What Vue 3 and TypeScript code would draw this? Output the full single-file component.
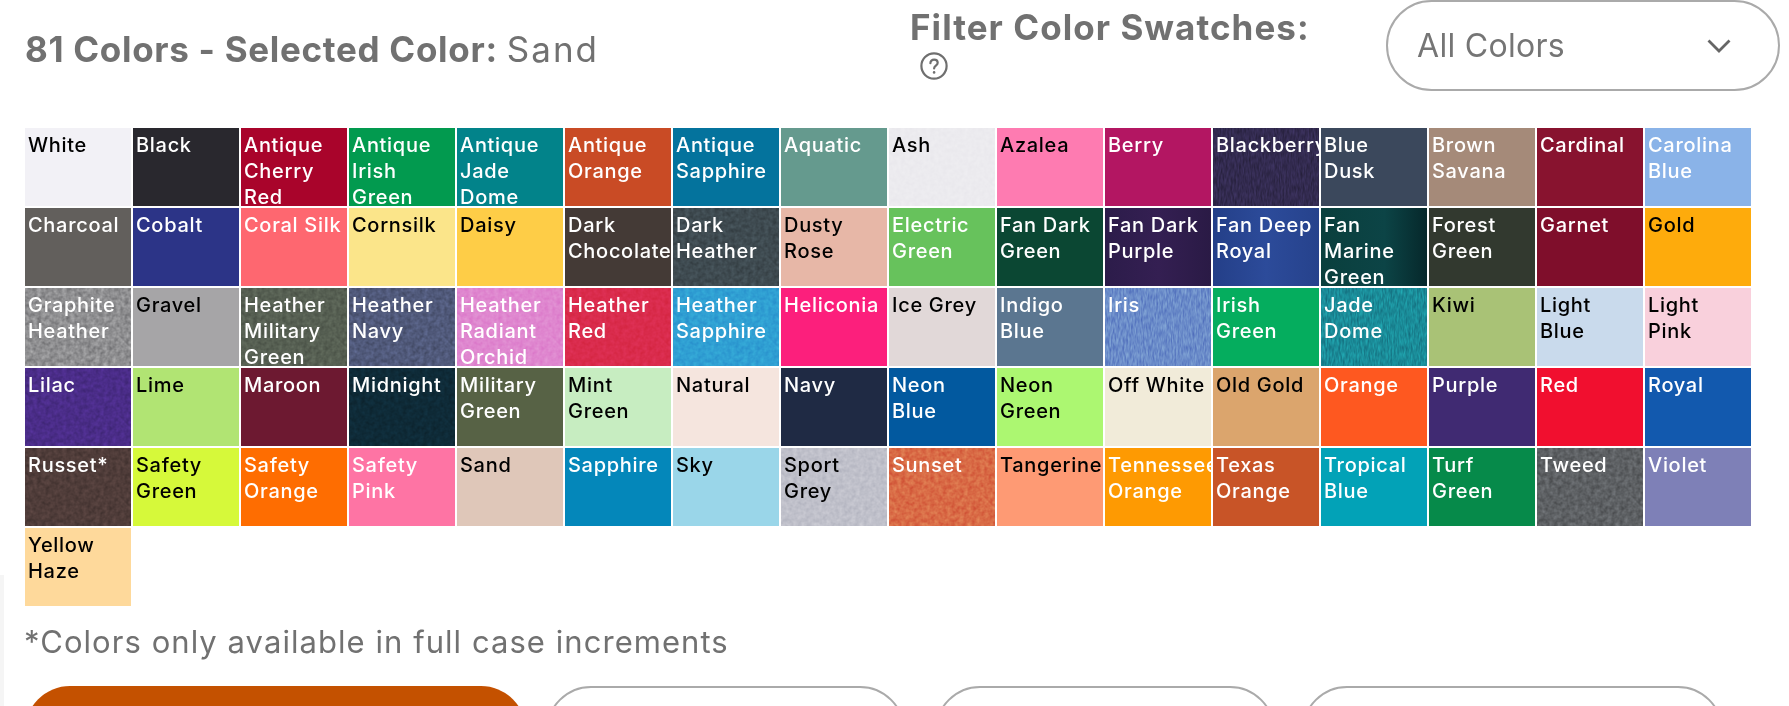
<script setup lang="ts">
interface Swatch {
  name: string
  bg: string
  light?: boolean
  // overlay strength of the fabric texture, 0 to 1
  noise?: number
  rib?: boolean
}

const swatches: Swatch[] = [
  { name: 'White', bg: '#f2f1f6', light: true },
  { name: 'Black', bg: '#29282e' },
  { name: 'Antique Cherry Red', bg: '#a9042b' },
  { name: 'Antique Irish Green', bg: '#029a4f' },
  { name: 'Antique Jade Dome', bg: '#02838a' },
  { name: 'Antique Orange', bg: '#c94b25' },
  { name: 'Antique Sapphire', bg: '#04739d' },
  { name: 'Aquatic', bg: '#659a8e' },
  { name: 'Ash', bg: '#ecebef', light: true, noise: 0.25 },
  { name: 'Azalea', bg: '#fe7bb1', light: true },
  { name: 'Berry', bg: '#b31662' },
  { name: 'Blackberry', bg: '#322a4f', noise: 0.4, rib: true },
  { name: 'Blue Dusk', bg: '#3b485c' },
  { name: 'Brown Savana', bg: '#a58a79' },
  { name: 'Cardinal', bg: '#88132f' },
  { name: 'Carolina Blue', bg: '#8ab3e8' },
  { name: 'Charcoal', bg: '#625f5c' },
  { name: 'Cobalt', bg: '#2c3487' },
  { name: 'Coral Silk', bg: '#fe6770' },
  { name: 'Cornsilk', bg: '#fbe58a', light: true },
  { name: 'Daisy', bg: '#fecd47', light: true },
  { name: 'Dark Chocolate', bg: '#443a36' },
  { name: 'Dark Heather', bg: '#3e4a50', noise: 0.3 },
  { name: 'Dusty Rose', bg: '#e7b7a7', light: true },
  { name: 'Electric Green', bg: '#67c25c' },
  { name: 'Fan Dark Green', bg: '#0b4733' },
  { name: 'Fan Dark Purple', bg: 'linear-gradient(90deg, #2c1c4a, #341f52 50%, #2a1a45)' },
  { name: 'Fan Deep Royal', bg: 'linear-gradient(90deg, #243f88, #2c4b9a 50%, #26428c)' },
  { name: 'Fan Marine Green', bg: 'linear-gradient(90deg, #0a3f3d, #0c4446 60%, #06282b)' },
  { name: 'Forest Green', bg: '#32392f' },
  { name: 'Garnet', bg: '#7f0e2b' },
  { name: 'Gold', bg: '#feab0c', light: true },
  { name: 'Graphite Heather', bg: '#8e8e90', noise: 0.4 },
  { name: 'Gravel', bg: '#a6a5a7', light: true },
  { name: 'Heather Military Green', bg: '#565f52', noise: 0.25 },
  { name: 'Heather Navy', bg: '#50597a', noise: 0.3 },
  { name: 'Heather Radiant Orchid', bg: '#df86cf', noise: 0.2 },
  { name: 'Heather Red', bg: '#da2b4c', noise: 0.25 },
  { name: 'Heather Sapphire', bg: '#2f9fd3', noise: 0.25 },
  { name: 'Heliconia', bg: '#fc1f7c' },
  { name: 'Ice Grey', bg: '#e1d8d8', light: true },
  { name: 'Indigo Blue', bg: '#5b7690' },
  { name: 'Iris', bg: '#6a8bc9', noise: 0.4, rib: true },
  { name: 'Irish Green', bg: '#05ad5e' },
  { name: 'Jade Dome', bg: '#1a8b98', noise: 0.4, rib: true },
  { name: 'Kiwi', bg: '#a9c276', light: true },
  { name: 'Light Blue', bg: '#c9daec', light: true },
  { name: 'Light Pink', bg: '#f9d0dc', light: true },
  { name: 'Lilac', bg: '#4a2c88', noise: 0.25 },
  { name: 'Lime', bg: '#b1e473', light: true },
  { name: 'Maroon', bg: '#6d1931' },
  { name: 'Midnight', bg: '#0e2a37', noise: 0.3 },
  { name: 'Military Green', bg: '#576245' },
  { name: 'Mint Green', bg: '#c7edc1', light: true },
  { name: 'Natural', bg: '#f5e5de', light: true },
  { name: 'Navy', bg: '#1f2a44' },
  { name: 'Neon Blue', bg: '#02599f' },
  { name: 'Neon Green', bg: '#acf771', light: true },
  { name: 'Off White', bg: '#f1ebd9', light: true },
  { name: 'Old Gold', bg: '#dba56d', light: true },
  { name: 'Orange', bg: '#fe5820' },
  { name: 'Purple', bg: '#402a72' },
  { name: 'Red', bg: '#f10f2f' },
  { name: 'Royal', bg: '#1259ae' },
  { name: 'Russet*', bg: '#4f3c39', noise: 0.3 },
  { name: 'Safety Green', bg: '#d6f93a', light: true },
  { name: 'Safety Orange', bg: '#fe6d01' },
  { name: 'Safety Pink', bg: '#fe74a4' },
  { name: 'Sand', bg: '#dfc7b9', light: true },
  { name: 'Sapphire', bg: '#0487ba' },
  { name: 'Sky', bg: '#9ad6e9', light: true },
  { name: 'Sport Grey', bg: '#bfc0ca', light: true, noise: 0.3 },
  { name: 'Sunset', bg: '#d96a45', noise: 0.4 },
  { name: 'Tangerine', bg: '#fe9a74', light: true },
  { name: 'Tennessee Orange', bg: '#fe9a02' },
  { name: 'Texas Orange', bg: '#c85427' },
  { name: 'Tropical Blue', bg: '#02a2b7' },
  { name: 'Turf Green', bg: '#068a4a' },
  { name: 'Tweed', bg: '#5d6063', noise: 0.35 },
  { name: 'Violet', bg: '#7e80b7' },
  { name: 'Yellow Haze', bg: '#fed99b', light: true },
]
</script>

<template>
  <div class="page">
    <div class="rail" />
    <svg class="defs" width="0" height="0" aria-hidden="true">
      <filter id="heather" x="0" y="0" width="100%" height="100%" color-interpolation-filters="sRGB">
        <feTurbulence type="fractalNoise" baseFrequency="0.24" numOctaves="2" seed="4" />
        <feColorMatrix values="0.9 0 0 0 0.05  0.9 0 0 0 0.05  0.9 0 0 0 0.05  0 0 0 0 1" />
      </filter>
      <filter id="ribbed" x="0" y="0" width="100%" height="100%" color-interpolation-filters="sRGB">
        <feTurbulence type="fractalNoise" baseFrequency="0.6 0.14" numOctaves="2" seed="9" />
        <feColorMatrix values="0.9 0 0 0 0.05  0.9 0 0 0 0.05  0.9 0 0 0 0.05  0 0 0 0 1" />
      </filter>
    </svg>

    <header class="top">
      <h2 class="count">81 Colors - Selected Color: <span>Sand</span></h2>
      <div class="filter">
        <div class="filter__label">
          <div>Filter Color Swatches:</div>
          <svg class="filter__help" viewBox="0 0 28 28" fill="none" stroke="#6f6f6f" stroke-width="2.2">
            <circle cx="14" cy="14" r="12.6" />
            <path d="M10.4 11.2c0-2.200 1.600-3.600 3.700-3.600s3.600 1.300 3.600 3.200c0 2.900-3.600 2.900-3.600 5.600" stroke-linecap="round" />
            <circle cx="14.100" cy="20.400" r="1.300" fill="#6f6f6f" stroke="none" />
          </svg>
        </div>
        <div class="select">
          <span>All Colors</span>
          <svg class="select__chevron" viewBox="0 0 24 14" fill="none" stroke="#666" stroke-width="2.800">
            <path d="M1.500 1.500 12 12 22.500 1.500" />
          </svg>
        </div>
      </div>
    </header>

    <div class="grid">
      <div
        v-for="s in swatches"
        :key="s.name"
        class="swatch"
        :class="{ 'swatch--light': s.light }"
        :style="{ background: s.bg }"
      >
        <svg v-if="s.noise" class="swatch__noise" width="106" height="78" :style="{ opacity: s.noise }">
          <rect width="106" height="78" :filter="s.rib ? 'url(#ribbed)' : 'url(#heather)'" />
        </svg>
        <span class="swatch__name">{{ s.name }}</span>
      </div>
    </div>

    <p class="note">*Colors only available in full case increments</p>

    <div class="actions">
      <div class="btn btn--primary" />
      <div class="btn btn--a" />
      <div class="btn btn--b" />
      <div class="btn btn--c" />
    </div>
  </div>
</template>

<style>
html,
body {
  margin: 0;
  background: #fff;
  overflow: hidden;
}
</style>

<style scoped>
.page {
  position: relative;
  width: 1789px;
  height: 706px;
  overflow: hidden;
  box-sizing: border-box;
  padding-left: 25px;
  font-family: Inter, "Noto Sans", sans-serif;
  color: #717171;
}

.rail {
  position: absolute;
  left: 0;
  top: 575px;
  bottom: 0;
  width: 4px;
  background: #f5f5f5;
}

.defs {
  position: absolute;
}

.top {
  display: flex;
  justify-content: space-between;
  height: 128px;
}

.count {
  margin: 28px 0 0;
  font-size: 35px;
  line-height: 42px;
  font-weight: 700;
  letter-spacing: 0.7px;
  color: #717171;
}

.count span {
  font-weight: 400;
  letter-spacing: 2px;
}

.filter {
  display: flex;
  margin-right: 9px;
  align-items: flex-start;
}

.filter__label {
  width: 476px;
  padding-top: 6px;
  font-size: 35px;
  line-height: 42px;
  font-weight: 700;
  letter-spacing: 1.050px;
  color: #717171;
}

.filter__help {
  display: block;
  width: 28px;
  height: 28px;
  margin: 4px 0 0 10px;
}

.select {
  display: flex;
  align-items: center;
  justify-content: space-between;
  box-sizing: border-box;
  width: 394px;
  height: 91px;
  padding: 0 47px 0 29px;
  border: 2px solid #aaa;
  border-radius: 46px;
  font-size: 32px;
  letter-spacing: 0.3px;
  color: #757575;
}

.select__chevron {
  width: 24px;
  height: 14px;
}

.grid {
  display: grid;
  grid-template-columns: repeat(16, 106px);
  grid-auto-rows: 78px;
  gap: 2px;
}

.swatch {
  position: relative;
  overflow: hidden;
  padding: 4px 0 0 3px;
  font-size: 20px;
  line-height: 26px;
  font-weight: 500;
  letter-spacing: 0.7px;
  color: #fff;
}

.swatch--light {
  color: #000;
}

.swatch__noise {
  position: absolute;
  left: 0;
  top: 0;
  mix-blend-mode: overlay;
}

.swatch__name {
  position: relative;
  display: block;
  width: 99px;
}

.note {
  margin: 16px 0 0 -1px;
  font-size: 31px;
  line-height: 40px;
  letter-spacing: 1.050px;
  color: #717171;
}

.actions {
  display: flex;
  margin-top: 24px;
}

.btn {
  flex: none;
  box-sizing: border-box;
  height: 90px;
  border-radius: 45px;
  border: 2px solid #aaa;
}

.btn--primary {
  width: 501px;
  border: 0;
  background: #c45100;
}

.btn--a {
  width: 359px;
  margin-left: 20px;
}

.btn--b {
  width: 340px;
  margin-left: 30px;
}

.btn--c {
  width: 421px;
  margin-left: 27px;
}
</style>
